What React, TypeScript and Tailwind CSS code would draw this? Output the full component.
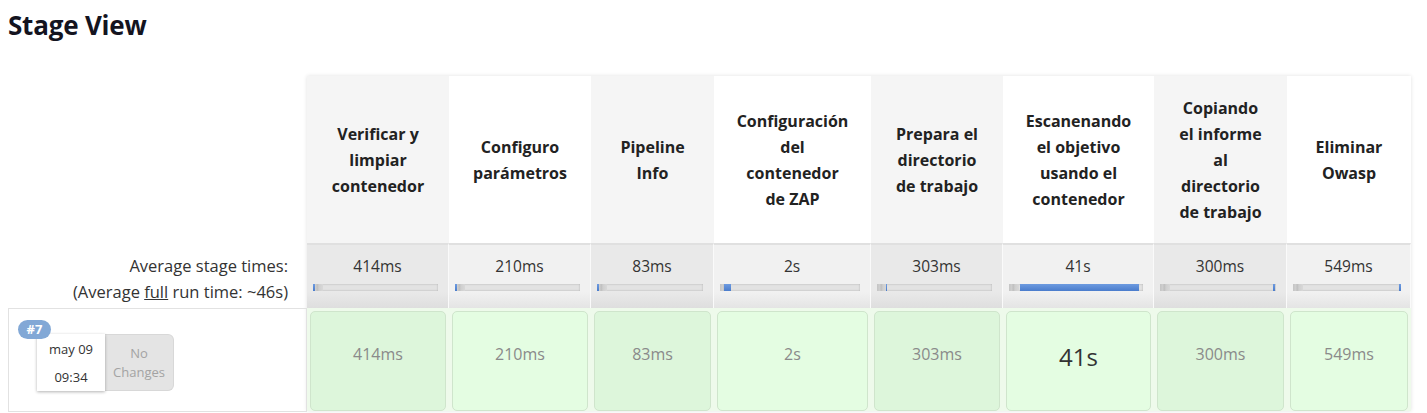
import React from "react";

type Stage = {
  lines: string[];
  avg: string;
  bars: { left: number; width: number }[];
  big?: boolean;
};

const stages: Stage[] = [
  { lines: ["Verificar y", "limpiar", "contenedor"], avg: "414ms", bars: [{ left: 0, width: 2 }] },
  { lines: ["Configuro", "parámetros"], avg: "210ms", bars: [{ left: 0, width: 2 }] },
  { lines: ["Pipeline", "Info"], avg: "83ms", bars: [{ left: 0, width: 2 }] },
  { lines: ["Configuración", "del", "contenedor", "de ZAP"], avg: "2s", bars: [{ left: 4, width: 7 }] },
  { lines: ["Prepara el", "directorio", "de trabajo"], avg: "303ms", bars: [{ left: 9, width: 1 }] },
  { lines: ["Escanenando", "el objetivo", "usando el", "contenedor"], avg: "41s", bars: [{ left: 11, width: 119 }], big: true },
  { lines: ["Copiando", "el informe", "al", "directorio", "de trabajo"], avg: "300ms", bars: [{ left: 113, width: 2 }] },
  { lines: ["Eliminar", "Owasp"], avg: "549ms", bars: [{ left: 106, width: 2 }] },
];

const widths = [142, 142, 123, 157, 132, 151, 133, 124];

export default function App() {
  return (
    <div
      className="w-[1427px] h-[413px] bg-white overflow-hidden text-[#333]"
      style={{ fontFamily: '"Open Sans", "Noto Sans", sans-serif' }}
    >
      <h2 className="pl-[8px] pt-[8px] text-[26px] leading-[34px] font-bold text-[#14141f] tracking-[-0.2px]">
        Stage View
      </h2>
      <div className="flex pl-[8px] mt-[34px]">
        {/* left column */}
        <div className="w-[299px] flex flex-col">
          <div className="h-[167px]" />
          <div className="h-[65px] flex flex-col items-end justify-center pr-[19px] text-[16.5px] leading-[26px] text-[#333] pt-[6px]">
            <div>Average stage times:</div>
            <div>
              (Average <span className="underline">full</span> run time: ~46s)
            </div>
          </div>
          <div className="h-[104px] border border-[#e2e2e2] relative">
            <div className="absolute left-[9px] top-[11px] z-10 w-[33px] h-[19px] rounded-full bg-[#82a8d6] text-white text-[13px] leading-[19px] font-bold text-center">
              #7
            </div>
            <div className="absolute left-[28px] top-[25px] flex">
              <div className="w-[68px] h-[57px] bg-white shadow-[0_1px_3px_rgba(0,0,0,0.3)] flex flex-col items-center justify-center text-[13px] leading-[28px] text-[#333] z-0">
                <div>may 09</div>
                <div>09:34</div>
              </div>
              <div className="w-[69px] h-[57px] bg-[#e4e4e4] rounded-r-[6px] border border-[#d8d8d8] border-l-0 flex flex-col items-center justify-center text-[13px] leading-[19px] text-[#a3a3a3]">
                <div>No</div>
                <div>Changes</div>
              </div>
            </div>
          </div>
        </div>
        {/* stage columns */}
        <div className="flex shadow-[0_0_4px_rgba(0,0,0,0.12)] self-start">
          {stages.map((s, i) => {
            const odd = i % 2 === 0;
            const w = widths[i];
            const track = w - 17;
            return (
              <div key={i} className="flex flex-col" style={{ width: w }}>
                <div
                  className={`h-[167px] flex flex-col items-center justify-center text-[16px] leading-[26px] font-bold text-[#222] text-center ${
                    odd ? "bg-[#f5f5f5]" : "bg-white"
                  }`}
                >
                  {s.lines.map((l, j) => (
                    <div key={j}>{l}</div>
                  ))}
                </div>
                <div
                  className={`h-[65px] border-t-2 border-[#e0e0e0] border-r border-r-[#fafafa] flex flex-col ${
                    odd
                      ? "bg-[linear-gradient(#e9e9e9,#e9e9e9_75%,#dedede)]"
                      : "bg-[linear-gradient(#f1f1f1,#f1f1f1_75%,#e4e4e4)]"
                  }`}
                >
                  <div className="text-[15.5px] leading-[20px] mt-[11px] text-[#333] text-center">{s.avg}</div>
                  <div
                    className="relative h-[7px] mt-[8px] ml-[6px] bg-[#e2e2e2] shadow-[inset_0_0_2px_rgba(0,0,0,0.25)]"
                    style={{ width: track }}
                  >
                    <div className="absolute left-0 top-0 h-full w-[10px] bg-[linear-gradient(90deg,#c4c4c4,#d0d0d0_30%,#bdbdbd_40%,#cfcfcf_60%,#d8d8d8)]" />
                    {s.bars.map((b, j) => (
                      <div
                        key={j}
                        className="absolute top-0 h-full bg-[linear-gradient(#6d9be0,#4a7ccc)]"
                        style={{ left: b.left, width: b.width }}
                      />
                    ))}
                  </div>
                </div>
                <div className="h-[103px] bg-[#eefaeb] p-[3px]">
                  <div
                    className={`h-[100px] rounded-[5px] border border-[#cfe5cc] flex justify-center pt-[30px] ${
                      odd ? "bg-[#ddf6db]" : "bg-[#e4fde2]"
                    } ${s.big ? "text-[24px] leading-[30px] text-[#333]" : "text-[16px] leading-[25px] text-[#8a8a8a]"}`}
                  >
                    {s.avg}
                  </div>
                </div>
              </div>
            );
          })}
        </div>
      </div>
    </div>
  );
}
